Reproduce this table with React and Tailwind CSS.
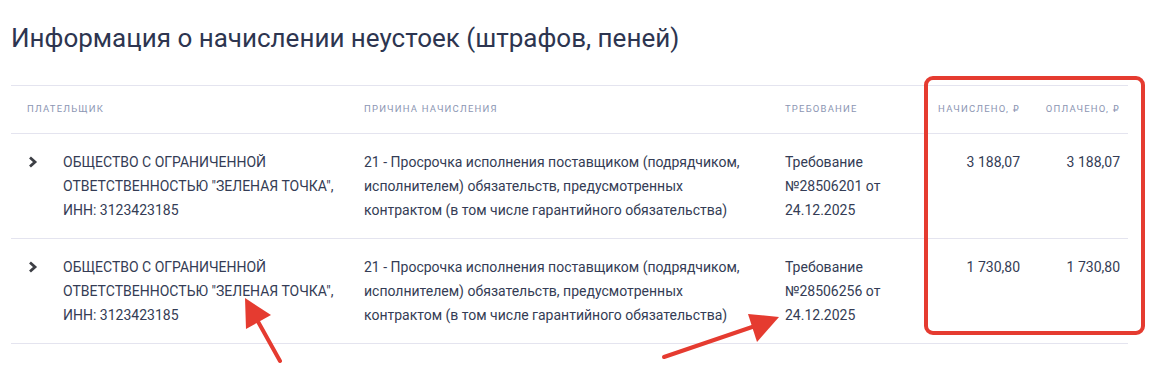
import React from 'react';

const rows = [
  {
    payer: 'ОБЩЕСТВО С ОГРАНИЧЕННОЙ ОТВЕТСТВЕННОСТЬЮ "ЗЕЛЕНАЯ ТОЧКА", ИНН: 3123423185',
    reason: '21 - Просрочка исполнения поставщиком (подрядчиком, исполнителем) обязательств, предусмотренных контрактом (в том числе гарантийного обязательства)',
    demand: 'Требование №28506201 от 24.12.2025',
    accrued: '3 188,07',
    paid: '3 188,07',
  },
  {
    payer: 'ОБЩЕСТВО С ОГРАНИЧЕННОЙ ОТВЕТСТВЕННОСТЬЮ "ЗЕЛЕНАЯ ТОЧКА", ИНН: 3123423185',
    reason: '21 - Просрочка исполнения поставщиком (подрядчиком, исполнителем) обязательств, предусмотренных контрактом (в том числе гарантийного обязательства)',
    demand: 'Требование №28506256 от 24.12.2025',
    accrued: '1 730,80',
    paid: '1 730,80',
  },
];

const Chevron = () => (
  <svg width="12" height="12" viewBox="0 0 12 12" className="mt-[6px] shrink-0">
    <path d="M3 1.5 L8 6 L3 10.5" fill="none" stroke="#3d3f45" strokeWidth="2.8" strokeLinejoin="miter" />
  </svg>
);

const Rub = () => <span style={{ fontFamily: '"DejaVu Sans", sans-serif' }}>₽</span>;

const Annotations = () => (
  <svg className="absolute inset-0 pointer-events-none" width="1152" height="381">
    <rect x="926" y="78" width="217" height="255" rx="7" fill="none" stroke="#e53b30" strokeWidth="4" />
    <line x1="280" y1="361" x2="256" y2="318" stroke="#e53b30" strokeWidth="4" strokeLinecap="round" />
    <polygon points="245,298 271,315 246,329" fill="#e53b30" />
    <line x1="664" y1="357" x2="758" y2="325" stroke="#e53b30" strokeWidth="4" strokeLinecap="round" />
    <polygon points="779,317 748,314 757,342" fill="#e53b30" />
  </svg>
);

export default function App() {
  return (
    <div className="relative w-[1152px] h-[381px] bg-white overflow-hidden" style={{ fontFamily: 'Roboto, "Noto Sans", sans-serif' }}>
      <div className="pl-[11px] pr-[24px]">
        <h1 className="pt-[20px] text-[26px] leading-[37px] font-normal text-[#2d3550]">
          Информация о начислении неустоек (штрафов, пеней)
        </h1>

        <div className="mt-[28px] w-[1117px] border-t border-[#e4e4ef]">
          {/* header */}
          <div className="flex h-[48px] items-center border-b border-[#e4e4ef] text-[9.5px] uppercase tracking-[1.2px] text-[#8c96b3]">
            <div className="w-[337px] pl-4">Плательщик</div>
            <div className="w-[421px] pl-4">Причина начисления</div>
            <div className="w-[151px] pl-4">Требование</div>
            <div className="w-[108px] pr-2 text-right">Начислено, <Rub /></div>
            <div className="w-[100px] pr-2 text-right">Оплачено, <Rub /></div>
          </div>

          {/* rows */}
          {rows.map((r, i) => (
            <div key={i} className="flex py-4 border-b border-[#e4e4ef] text-[14px] leading-[24px] text-[#343c55]">
              <div className="w-[337px] pl-4 flex gap-[24px]">
                <Chevron />
                <div>{r.payer}</div>
              </div>
              <div className="w-[421px] pl-4 pr-4">{r.reason}</div>
              <div className="w-[151px] pl-4 pr-4">{r.demand}</div>
              <div className="w-[108px] pr-2 text-right">{r.accrued}</div>
              <div className="w-[100px] pr-2 text-right">{r.paid}</div>
            </div>
          ))}
        </div>
      </div>

      <Annotations />
    </div>
  );
}
